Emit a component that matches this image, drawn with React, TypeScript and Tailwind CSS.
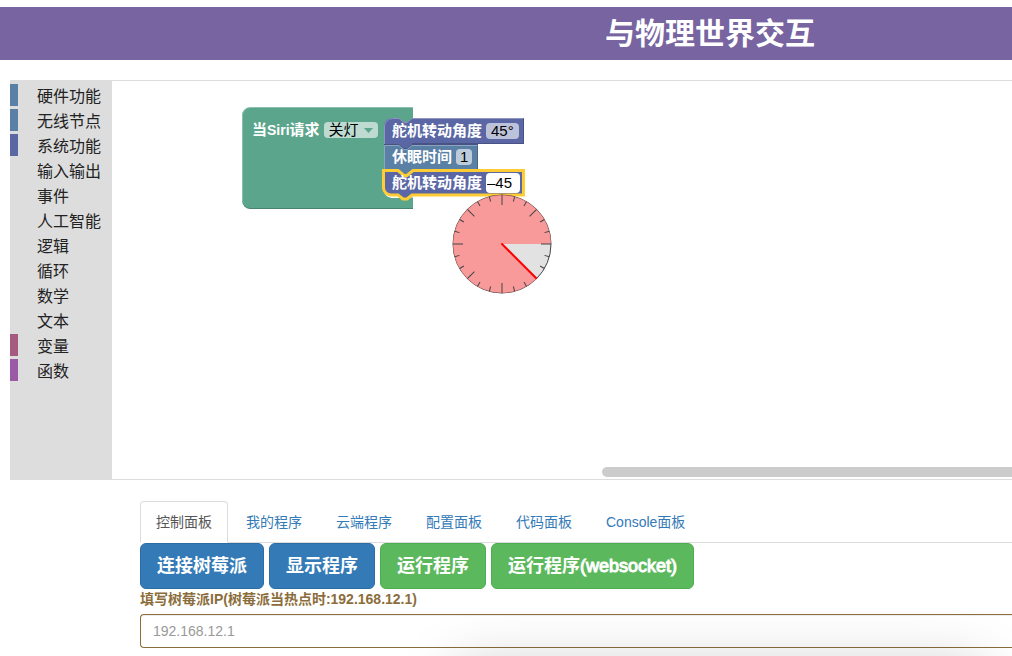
import React from "react";

const categories = [
  { name: "硬件功能", stripe: "bg-[#5b80a5]" },
  { name: "无线节点", stripe: "bg-[#5b80a5]" },
  { name: "系统功能", stripe: "bg-[#5b67a5]" },
  { name: "输入输出", stripe: "bg-transparent" },
  { name: "事件", stripe: "bg-transparent" },
  { name: "人工智能", stripe: "bg-transparent" },
  { name: "逻辑", stripe: "bg-transparent" },
  { name: "循环", stripe: "bg-transparent" },
  { name: "数学", stripe: "bg-transparent" },
  { name: "文本", stripe: "bg-transparent" },
  { name: "变量", stripe: "bg-[#a55b80]" },
  { name: "函数", stripe: "bg-[#995ba5]" },
];

const tabs = ["控制面板", "我的程序", "云端程序", "配置面板", "代码面板", "Console面板"];

const actions = [
  { label: "连接树莓派", suffix: "", tone: "bg-[#337ab7] border-[#2e6da4]" },
  { label: "显示程序", suffix: "", tone: "bg-[#337ab7] border-[#2e6da4]" },
  { label: "运行程序", suffix: "", tone: "bg-[#5cb85c] border-[#4cae4c]" },
  { label: "运行程序", suffix: "(websocket)", tone: "bg-[#5cb85c] border-[#4cae4c]" },
];

function Toolbox() {
  return (
    <nav className="w-[102px] shrink-0 bg-[#ddd] pt-1">
      <ul className="flex flex-col gap-[3px]">
        {categories.map((c) => (
          <li key={c.name}>
            <button type="button" className="flex h-[22px] w-full gap-[19px] text-left text-base leading-[22px] whitespace-nowrap text-[#222]">
              <span className={"h-full w-2 shrink-0 " + c.stripe} />
              <span className="pt-[2px]">{c.name}</span>
            </button>
          </li>
        ))}
      </ul>
    </nav>
  );
}

function BlockShapes() {
  return (
    <svg className="absolute top-0 left-0" width="440" height="240" viewBox="112 81 440 240" fill="none" aria-hidden="true">
      <path
        d="M250 107.5H413V190H384a7 7 0 0 0 7 7.500H413V208.500H250a8 8 0 0 1-8-8V115.500a8 8 0 0 1 8-8z"
        fill="#5ba58c"
      />
      <path d="M242.500 201V115.500a8 8 0 0 1 8-8H413" stroke="#8cc0ae" />
      <path d="M413 208.500H250a8 8 0 0 1-6-3" stroke="#498470" />
      <path d="M384 144V126a8 8 0 0 1 8-8H399l5 4h3l5-4H524V144H412l-5 4h-3l-5-4z" fill="#5b67a5" />
      <path d="M384.500 144V126a8 8 0 0 1 8-7.500H399l5 4h3l5-4H523" stroke="#8c95c0" />
      <path d="M523.500 119V143.500H412" stroke="#495284" />
      <path d="M384 145H399l5 4h3l5-4H478V170H416l-6 8H400l-6-8H384z" fill="#5b80a5" />
      <path d="M384.500 170V145.500H399l5 4h3l5-4H477" stroke="#8ca6c0" />
      <path d="M477.500 146V170" stroke="#496684" />
      <path d="M384 144.500H399l5 4h3l5-4H478" stroke="#495284" />
      <path d="M386 192l5 6H411l-5-3z" fill="#fff" />
      <path
        d="M383.500 170.500H398l6 5h3l6-5H523.500V195H412l-5 4h-4l-5-4H391a7.500 7.500 0 0 1-7.500-7.500z"
        fill="#5b67a5"
        stroke="#fc3"
        strokeWidth="3"
      />
    </svg>
  );
}

function AnglePicker() {
  const ticks = Array.from({ length: 24 }, (_, i) => i * 15);
  return (
    <svg className="absolute top-[113px] left-[340px]" width="100" height="100" viewBox="0 0 100 100" role="img" aria-label="角度">
      <circle cx="50" cy="50" r="49" fill="#ddd" fillOpacity=".85" stroke="#444" />
      <path d="M50 50L99 50A49 49 0 1 0 84.650 84.650z" fill="#f88" fillOpacity=".8" />
      {ticks.map((a) => (
        <line key={a} x1="99" y1="50" x2={a % 45 === 0 ? 89 : 94} y2="50" stroke="#444" transform={"rotate(" + a + " 50 50)"} />
      ))}
      <path d="M50 50L84 84" stroke="#f00" strokeWidth="2" strokeLinecap="round" />
    </svg>
  );
}

function Workspace() {
  return (
    <section className="relative min-w-0 flex-1 overflow-hidden border-y border-[#ddd] bg-white">
      <BlockShapes />
      <div className="absolute top-[38px] left-[140px] flex h-[22px] items-center gap-1 text-[15px] whitespace-nowrap">
        <label htmlFor="request" className="font-bold text-white">
          当<span className="text-sm">Siri</span>请求
        </label>
        <span className="relative flex items-center">
          <select id="request" className="h-4 w-[54px] appearance-none rounded bg-[#bddbd1] pl-[5px] leading-4 text-black">
            <option>关灯</option>
          </select>
          <svg className="pointer-events-none absolute right-[5px]" width="9" height="5" viewBox="0 0 9 5" aria-hidden="true">
            <path d="M0 0h9L4.500 5z" fill="#5ba58c" />
          </svg>
        </span>
      </div>
      <div className="absolute top-[37px] left-[280px] flex flex-col text-[15px] font-bold whitespace-nowrap text-white">
        <div className="flex h-[26px] items-center gap-1">
          舵机转动角度
          <button type="button" className="h-4 rounded bg-[#bdc2db] px-[5px] leading-4 font-normal text-black">45°</button>
        </div>
        <div className="flex h-[26px] items-center gap-1">
          休眠时间
          <button type="button" className="h-4 rounded bg-[#bdccdb] px-1 leading-4 font-normal text-black">1</button>
        </div>
        <div className="flex h-[26px] items-center gap-1">
          <label htmlFor="angle">舵机转动角度</label>
          <input id="angle" defaultValue="–45" className="h-5 w-[34px] rounded bg-white px-px font-normal text-black outline-none" />
        </div>
      </div>
      <AnglePicker />
      <div className="absolute right-0 bottom-[2px] left-[490px] h-[10px] rounded-l-full bg-[#ccc]" />
    </section>
  );
}

export default function App() {
  return (
    <div className="relative min-h-screen overflow-hidden bg-white pt-[7px] font-['Liberation_Sans','Noto_Sans_CJK_SC',sans-serif] text-sm text-[#333]">
      <header className="flex h-[53px] items-center justify-center bg-[#7764a0] pl-102">
        <h1 className="text-[30px] leading-none font-bold whitespace-nowrap text-white">与物理世界交互</h1>
      </header>
      <main>
        <div className="mt-5 ml-[10px] flex h-[400px]">
          <Toolbox />
          <Workspace />
        </div>
        <div className="mt-[21px] ml-[140px]">
          <ul className="flex gap-[2px] border-b border-[#ddd]">
            {tabs.map((t, i) => (
              <li key={t} className="-mb-px">
                <a
                  href="#"
                  className={
                    "block rounded-t border px-[15px] py-[10px] leading-5 whitespace-nowrap " +
                    (i === 0 ? "border-[#ddd] border-b-white bg-white text-[#555]" : "border-transparent text-[#337ab7]")
                  }
                >
                  {t}
                </a>
              </li>
            ))}
          </ul>
          <div className="flex gap-[5px]">
            {actions.map((a) => (
              <button
                key={a.label + a.suffix}
                type="button"
                className={"h-[46px] rounded-md border px-4 text-lg leading-6 font-bold whitespace-nowrap text-white " + a.tone}
              >
                {a.label}
                {a.suffix && <span className="font-normal [-webkit-text-stroke:1px_white]">{a.suffix}</span>}
              </button>
            ))}
          </div>
          <label htmlFor="ip" className="mb-[5px] block leading-5 font-bold text-[#8a6d3b]">
            填写树莓派IP(树莓派当热点时:192.168.12.1)
          </label>
          <input
            id="ip"
            placeholder="192.168.12.1"
            className="block h-[34px] w-full rounded-l border border-r-0 border-[#8a6d3b] bg-white px-3 shadow-[inset_0_1px_1px_rgba(0,0,0,0.075)] outline-none placeholder:text-[#999]"
          />
        </div>
      </main>
      <div className="pointer-events-none absolute top-full right-7 left-[455px] mt-3 h-20 shadow-[0_0_60px_rgba(0,0,0,0.22)]" />
    </div>
  );
}
